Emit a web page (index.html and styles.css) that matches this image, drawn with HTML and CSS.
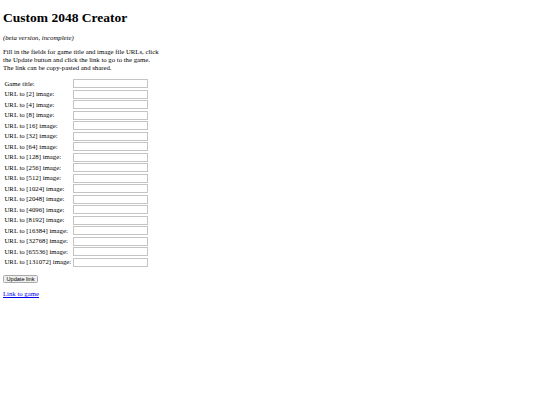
FILE: index.html
```html
<!DOCTYPE html>
<html>
<head>
<meta charset="utf-8">
<title>Custom 2048 Creator</title>
<link rel="stylesheet" href="styles.css">
</head>
<body class="page">
<h1 class="title">Custom 2048 Creator</h1>
<p class="note"><i>(beta version, incomplete)</i></p>
<p class="intro">Fill in the fields for game title and image file URLs, click<br>the Update button and click the link to go to the game.<br>The link can be copy-pasted and shared.</p>
<table class="form">
<tr><td class="label">Game title:</td><td><input class="field" type="text"></td></tr>
<tr><td class="label">URL to [2] image:</td><td><input class="field" type="text"></td></tr>
<tr><td class="label">URL to [4] image:</td><td><input class="field" type="text"></td></tr>
<tr><td class="label">URL to [8] image:</td><td><input class="field" type="text"></td></tr>
<tr><td class="label">URL to [16] image:</td><td><input class="field" type="text"></td></tr>
<tr><td class="label">URL to [32] image:</td><td><input class="field" type="text"></td></tr>
<tr><td class="label">URL to [64] image:</td><td><input class="field" type="text"></td></tr>
<tr><td class="label">URL to [128] image:</td><td><input class="field" type="text"></td></tr>
<tr><td class="label">URL to [256] image:</td><td><input class="field" type="text"></td></tr>
<tr><td class="label">URL to [512] image:</td><td><input class="field" type="text"></td></tr>
<tr><td class="label">URL to [1024] image:</td><td><input class="field" type="text"></td></tr>
<tr><td class="label">URL to [2048] image:</td><td><input class="field" type="text"></td></tr>
<tr><td class="label">URL to [4096] image:</td><td><input class="field" type="text"></td></tr>
<tr><td class="label">URL to [8192] image:</td><td><input class="field" type="text"></td></tr>
<tr><td class="label">URL to [16384] image:</td><td><input class="field" type="text"></td></tr>
<tr><td class="label">URL to [32768] image:</td><td><input class="field" type="text"></td></tr>
<tr><td class="label">URL to [65536] image:</td><td><input class="field" type="text"></td></tr>
<tr><td class="label">URL to [131072] image:</td><td><input class="field" type="text"></td></tr>
</table>
<p class="actions"><button class="update" type="button">Update link</button></p>
<p class="gamelink"><a class="link" href="#">Link to game</a></p>
</body>
</html>
```
FILE: styles.css
```css
html {
  background: #fff;
}
.page {
  margin: 3px;
  font-family: "Liberation Serif", "Times New Roman", serif;
  font-size: 6.75px;
  line-height: 8px;
  color: #000;
}
.title {
  font-size: 13.5px;
  line-height: 16px;
  font-weight: bold;
  margin: 7px 0 8px;
}
.note, .intro {
  margin: 6px 0;
}
.actions, .gamelink {
  margin: 7px 0;
}
.form {
  border-collapse: separate;
  border-spacing: 1px;
  margin: 6px 0 7px;
}
.form td {
  padding: 0.25px 0.5px;
}
.field {
  display: block;
  width: 75px;
  height: 9px;
  padding: 0;
  margin: 0;
  border: 1px solid #c4c4c4;
  box-sizing: border-box;
  background: #fff;
  font-size: 5.6px;
}
.update {
  font-family: "Liberation Sans", Arial, sans-serif;
  font-size: 5.6px;
  height: 8px;
  line-height: 6px;
  padding: 0 2.5px;
  margin: 0;
  vertical-align: top;
  background: #efefef;
  border: 1px solid #a9a9a9;
  border-radius: 1.5px;
  color: #000;
}
.link {
  color: #0000ee;
  text-decoration: underline;
}
```
